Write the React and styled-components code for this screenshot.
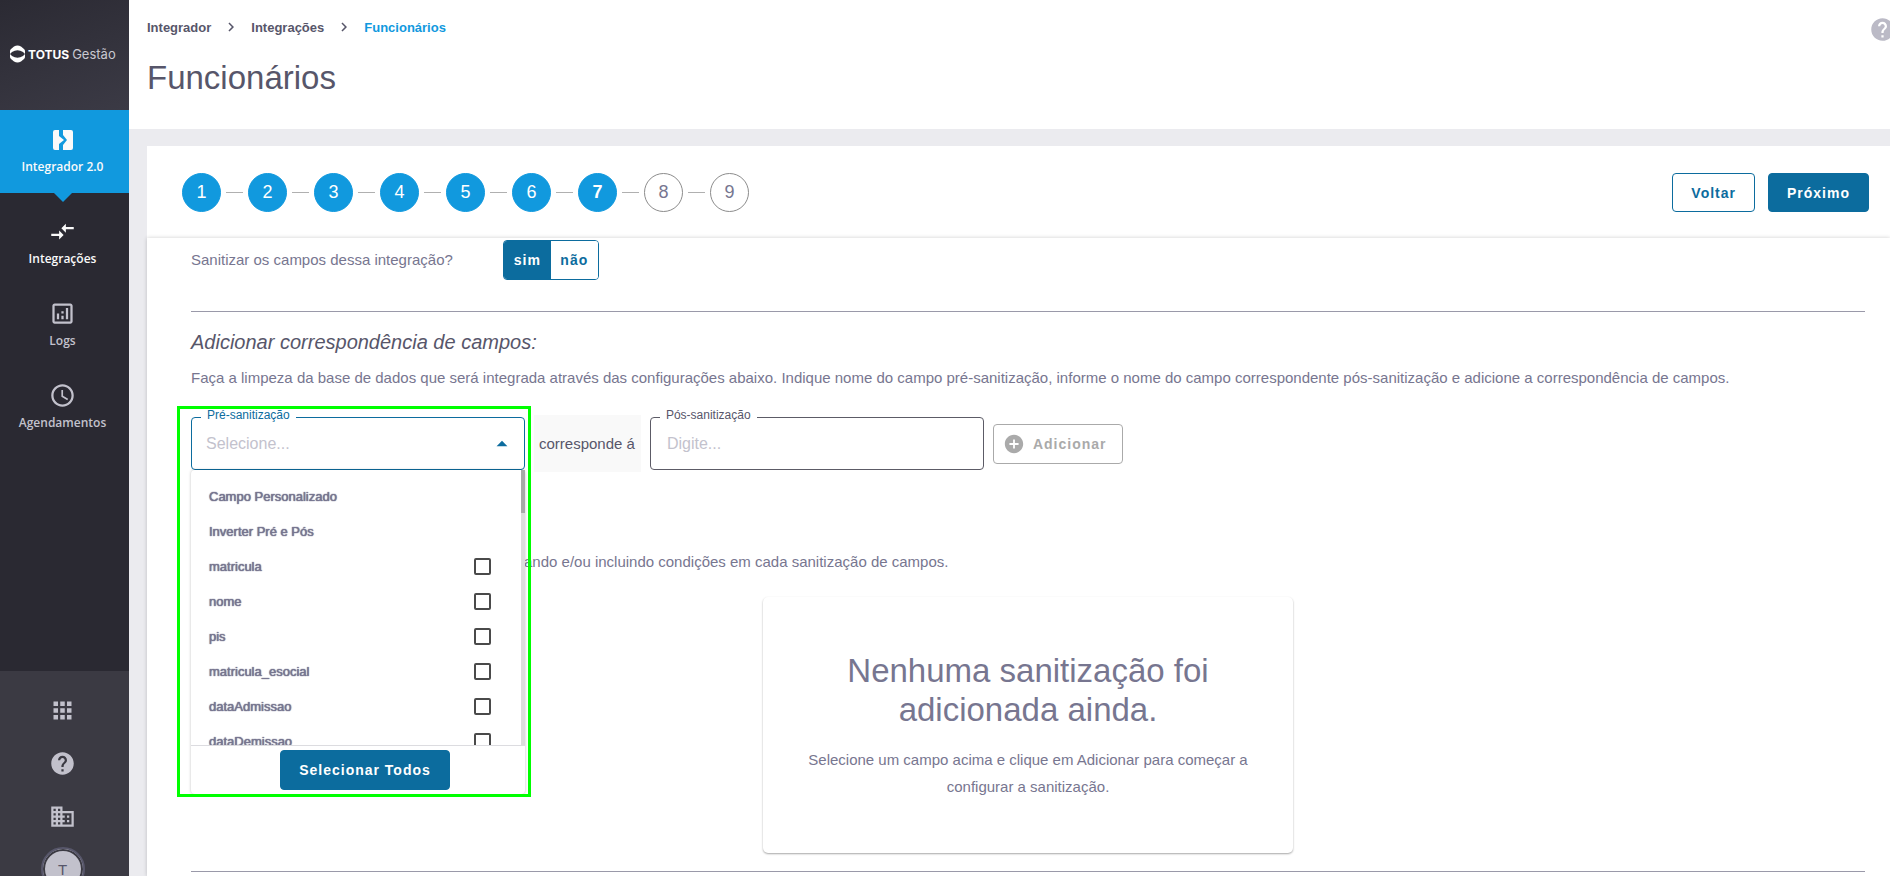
import { useState } from 'react';
import styled, { createGlobalStyle, css } from 'styled-components';
import {
	MdAddCircle,
	MdApps,
	MdArrowDropUp,
	MdBusiness,
	MdChevronRight,
	MdCompareArrows,
	MdHelp,
	MdOutlineAnalytics,
	MdSchedule,
} from 'react-icons/md';

const colors = {
	blue: '#1199de',
	action: '#0c6c9e',
	text: '#777690',
	textDark: '#57566a',
	rule: '#9a99a9',
	page: '#ebebef',
	icon: '#c2c1cc',
};

const steps = [1, 2, 3, 4, 5, 6, 7, 8, 9];
const currentStep = 7;

const fields = ['matricula', 'nome', 'pis', 'matricula_esocial', 'dataAdmissao', 'dataDemissao'];

const IntegradorIcon = () => (
	<svg width="20" height="20" viewBox="0 0 20 20" fill="#fafafa" aria-hidden="true">
		<path d="M2 0h4v6l5 4-5 4v6H2a2 2 0 0 1-2-2V2a2 2 0 0 1 2-2z" />
		<path d="M10 0h8a2 2 0 0 1 2 2v16a2 2 0 0 1-2 2h-8v-5l4-5-4-5z" />
	</svg>
);

const LogoMark = () => (
	<svg width="15" height="18" viewBox="0 0 15 18" fill="#fff" aria-hidden="true">
		<path
			fillRule="evenodd"
			d="M4 1.5Q7.5-.5 11 1.5L14 4Q15 5 15 6V12Q15 13 14 14L11 16.5Q7.5 18.5 4 16.5L1 14Q0 13 0 12V6Q0 5 1 4ZM0 9L2 7Q7.5 3.5 13 7L15 9L13 11Q7.5 14.5 2 11Z"
		/>
	</svg>
);

const menu = [
	{ label: 'Integrações', icon: MdCompareArrows, bright: true },
	{ label: 'Logs', icon: MdOutlineAnalytics },
	{ label: 'Agendamentos', icon: MdSchedule },
];

const Sidebar = () => (
	<Side>
		<Logo>
			<LogoMark />
			<strong>TOTUS</strong>
			<span>Gestão</span>
		</Logo>
		<Nav>
			<NavItem href="#integrador" $active>
				<NavIcon>
					<IntegradorIcon />
				</NavIcon>
				Integrador 2.0
			</NavItem>
			<SubNav>
				{menu.map(({ label, icon: Icon, bright }) => (
					<NavItem key={label} href={`#${label}`} $bright={bright}>
						<NavIcon>
							<Icon />
						</NavIcon>
						{label}
					</NavItem>
				))}
			</SubNav>
		</Nav>
		<SideFooter>
			<SideButton aria-label="Aplicativos">
				<MdApps />
			</SideButton>
			<SideButton aria-label="Ajuda">
				<MdHelp />
			</SideButton>
			<SideButton aria-label="Empresa">
				<MdBusiness />
			</SideButton>
			<Avatar>T</Avatar>
		</SideFooter>
	</Side>
);

const Stepper = () => (
	<Steps>
		{steps.map((step) => (
			<Step key={step}>
				<StepCircle $done={step <= currentStep} $current={step === currentStep}>
					{step}
				</StepCircle>
			</Step>
		))}
	</Steps>
);

const FieldPicker = () => (
	<Picker>
		<Field $active>
			<FieldLabel htmlFor="pre" $active>
				Pré-sanitização
			</FieldLabel>
			<FieldInput id="pre" placeholder="Selecione..." />
			<MdArrowDropUp />
		</Field>
		<Dropdown>
			<OptionsArea>
				<Options>
					<Option as="li">Campo Personalizado</Option>
					<Option as="li">Inverter Pré e Pós</Option>
					{fields.map((name) => (
						<li key={name}>
							<Option>
								{name}
								<Checkbox type="checkbox" />
							</Option>
						</li>
					))}
				</Options>
				<Track>
					<Thumb />
				</Track>
			</OptionsArea>
			<DropdownFooter>
				<Button $filled>Selecionar Todos</Button>
			</DropdownFooter>
		</Dropdown>
		<Highlight />
	</Picker>
);

export default function App() {
	const [sanitize, setSanitize] = useState(true);

	return (
		<Layout>
			<GlobalStyle />
			<Sidebar />
			<Main>
				<Header>
					<div>
						<Breadcrumb>
							<Crumb href="#integrador">Integrador</Crumb>
							<MdChevronRight />
							<Crumb href="#integracoes">Integrações</Crumb>
							<MdChevronRight />
							<Crumb href="#funcionarios" $current>
								Funcionários
							</Crumb>
						</Breadcrumb>
						<Title>Funcionários</Title>
					</div>
					<HelpButton aria-label="Ajuda">
						<MdHelp />
					</HelpButton>
				</Header>
				<Content>
					<Toolbar>
						<Stepper />
						<Actions>
							<Button>Voltar</Button>
							<Button $filled>Próximo</Button>
						</Actions>
					</Toolbar>
					<Panel>
						<Question>
							<Text>Sanitizar os campos dessa integração?</Text>
							<Toggle>
								<ToggleButton $on={sanitize} onClick={() => setSanitize(true)}>
									sim
								</ToggleButton>
								<ToggleButton $on={!sanitize} onClick={() => setSanitize(false)}>
									não
								</ToggleButton>
							</Toggle>
						</Question>
						<Rule />
						<Subtitle>Adicionar correspondência de campos:</Subtitle>
						<Text>
							Faça a limpeza da base de dados que será integrada através das configurações abaixo. Indique nome do campo
							pré-sanitização, informe o nome do campo correspondente pós-sanitização e adicione a correspondência de campos.
						</Text>
						<Match>
							<FieldPicker />
							<MatchText>corresponde á</MatchText>
							<Field>
								<FieldLabel htmlFor="pos">Pós-sanitização</FieldLabel>
								<FieldInput id="pos" placeholder="Digite..." />
							</Field>
							<AddButton disabled>
								<MdAddCircle />
								Adicionar
							</AddButton>
						</Match>
						<Hint>ando e/ou incluindo condições em cada sanitização de campos.</Hint>
						<Empty>
							<EmptyTitle>Nenhuma sanitização foi adicionada ainda.</EmptyTitle>
							<EmptyText>Selecione um campo acima e clique em Adicionar para começar a configurar a sanitização.</EmptyText>
						</Empty>
						<Rule />
					</Panel>
				</Content>
			</Main>
		</Layout>
	);
}

const GlobalStyle = createGlobalStyle`
	* {
		box-sizing: border-box;
	}

	body {
		margin: 0;
		font-family: 'Liberation Sans', Arial, sans-serif;
		font-size: 15px;
		color: ${colors.text};
		background: ${colors.page};
	}

	button, input {
		font-family: inherit;
	}

	h1, h2, h3, p, ul, ol {
		margin: 0;
		padding: 0;
		font-weight: 400;
		list-style: none;
	}
`;

const Layout = styled.div`
	display: flex;
	height: 100vh;
	overflow: hidden;
`;

const Side = styled.aside`
	flex: 0 0 129px;
	display: flex;
	flex-direction: column;
	background: #2a2932;
	color: ${colors.icon};
`;

const Logo = styled.div`
	flex: 0 0 110px;
	display: flex;
	align-items: center;
	gap: 3px;
	padding: 0 0 2px 10px;
	background: linear-gradient(160deg, #2b2a33, #3b3a45);
	color: #fff;
	font-family: Inter, sans-serif;
	font-size: 13px;

	strong {
		font-size: 12px;
	}

	span {
		color: #c9c8d0;
	}
`;

const Nav = styled.nav`
	flex: 1;
`;

const SubNav = styled.div`
	padding-top: 9px;
`;

const NavItem = styled.a`
	position: relative;
	display: flex;
	flex-direction: column;
	align-items: center;
	gap: 5px;
	height: ${({ $active }) => ($active ? 83 : 82)}px;
	padding: 16px 4px 0 0;
	color: ${({ $active, $bright }) => ($active || $bright ? '#fafafa' : colors.icon)};
	font-family: 'Open Sans', sans-serif;
	font-size: 12px;
	font-weight: 600;
	line-height: 18px;
	text-decoration: none;

	${({ $active }) =>
		$active &&
		css`
			background: ${colors.blue};

			&::after {
				content: '';
				position: absolute;
				top: 100%;
				left: 54px;
				border: 9px solid transparent;
				border-top-color: ${colors.blue};
				border-bottom: 0;
			}
		`}
`;

const NavIcon = styled.span`
	display: flex;
	align-items: center;
	justify-content: center;
	height: 27px;
	font-size: 27px;
`;

const SideFooter = styled.div`
	flex: 0 0 205px;
	display: flex;
	flex-direction: column;
	align-items: center;
	gap: 26px;
	padding: 26px 4px 0 0;
	background: #3b3a43;
	overflow: hidden;
`;

const SideButton = styled.button`
	display: flex;
	padding: 0;
	border: 0;
	background: none;
	color: ${colors.icon};
	font-size: 27px;
`;

const Avatar = styled.button`
	flex: none;
	width: 44px;
	height: 44px;
	margin-top: -9px;
	padding: 0;
	border: 2px solid #57566a;
	border-radius: 50%;
	background: ${colors.icon};
	box-shadow: inset 0 0 0 2px #3b3a43;
	color: ${colors.textDark};
	font-size: 15px;
`;

const Main = styled.main`
	flex: 1;
	min-width: 0;
	display: flex;
	flex-direction: column;
`;

const Header = styled.header`
	flex: 0 0 129px;
	display: flex;
	justify-content: space-between;
	align-items: flex-start;
	padding: 16px 0 0 18px;
	background: #fff;
`;

const Breadcrumb = styled.nav`
	display: flex;
	align-items: center;
	gap: 11px;
	height: 22px;
	color: ${colors.textDark};

	svg {
		font-size: 18px;
	}
`;

const Crumb = styled.a`
	color: ${({ $current }) => ($current ? colors.blue : colors.textDark)};
	font-size: 13px;
	font-weight: 700;
	text-decoration: none;
`;

const Title = styled.h1`
	margin-top: 20px;
	color: ${colors.textDark};
	font-size: 33px;
	line-height: 39px;
`;

const HelpButton = styled.button`
	display: flex;
	width: 21px;
	padding: 0;
	border: 0;
	background: none;
	overflow: hidden;
	color: #bbbac6;

	svg {
		flex: none;
		width: 27px;
		height: 27px;
	}
`;

const Content = styled.div`
	flex: 1;
	min-height: 0;
	display: flex;
	flex-direction: column;
	padding: 17px 0 0 18px;
`;

const Toolbar = styled.div`
	display: flex;
	justify-content: space-between;
	padding: 27px 21px 26px 35px;
	background: #fff;
`;

const Steps = styled.ol`
	display: flex;
`;

const Step = styled.li`
	display: flex;
	align-items: center;

	& + &::before {
		content: '';
		width: 17px;
		height: 1px;
		margin: 0 5px;
		background: #b0b0b0;
	}
`;

const StepCircle = styled.button`
	width: 39px;
	height: 39px;
	padding: 0;
	border: 1px solid ${({ $done }) => ($done ? colors.blue : '#8c8c8c')};
	border-radius: 50%;
	background: ${({ $done }) => ($done ? colors.blue : '#fff')};
	color: ${({ $done }) => ($done ? '#fff' : colors.text)};
	font-size: 18px;
	font-weight: ${({ $current }) => ($current ? 700 : 400)};
`;

const Actions = styled.div`
	display: flex;
	gap: 13px;
`;

const Button = styled.button`
	height: 39px;
	padding: 0 18px;
	border: 1px solid ${colors.action};
	border-radius: 4px;
	background: ${({ $filled }) => ($filled ? colors.action : '#fff')};
	color: ${({ $filled }) => ($filled ? '#fff' : colors.action)};
	font-size: 14px;
	font-weight: 700;
	letter-spacing: 1px;
	white-space: nowrap;
`;

const AddButton = styled(Button)`
	display: flex;
	align-items: center;
	gap: 8px;
	height: 40px;
	padding: 0 16px 0 9px;
	border-color: #aaa;
	color: #aaa;

	svg {
		width: 22px;
		height: 22px;
	}
`;

const Panel = styled.section`
	flex: 1;
	min-height: 0;
	padding: 2px 25px 0 44px;
	background: #fff;
	box-shadow: 0 0 4px rgba(0, 0, 0, 0.2);
`;

const Text = styled.p`
	line-height: 20px;
`;

const Question = styled.div`
	display: flex;
	align-items: center;
	gap: 50px;
	padding-bottom: 31px;
`;

const Toggle = styled.div`
	display: flex;
	border: 1px solid ${colors.action};
	border-radius: 4px;
	overflow: hidden;
`;

const ToggleButton = styled.button`
	width: 47px;
	height: 38px;
	padding: 0;
	border: 0;
	background: ${({ $on }) => ($on ? colors.action : '#fff')};
	color: ${({ $on }) => ($on ? '#fff' : colors.action)};
	font-size: 14px;
	font-weight: 700;
	letter-spacing: 1px;
`;

const Rule = styled.hr`
	height: 1px;
	margin: 0;
	border: 0;
	background: ${colors.rule};
`;

const Subtitle = styled.h2`
	margin: 18px 0 14px;
	color: ${colors.textDark};
	font-size: 20px;
	font-style: italic;
	line-height: 24px;
`;

const Match = styled.div`
	display: flex;
	align-items: center;
	gap: 9px;
	margin-top: 27px;
`;

const MatchText = styled.span`
	padding: 18px 6px 18px 5px;
	background: #f9f9f9;
	color: ${colors.textDark};
	line-height: 21px;
	white-space: nowrap;
`;

const Picker = styled.div`
	position: relative;
`;

const Field = styled.div`
	position: relative;
	display: flex;
	align-items: center;
	width: 334px;
	height: 53px;
	padding: 0 9px 0 ${({ $active }) => ($active ? 14 : 16)}px;
	border: 1px solid ${({ $active }) => ($active ? colors.action : '#5c5b66')};
	border-radius: 4px;

	svg {
		flex: none;
		width: 26px;
		height: 26px;
		color: ${colors.action};
	}
`;

/* sits over the border and cuts it */
const FieldLabel = styled.label`
	position: absolute;
	top: -10px;
	left: 9px;
	padding: 0 6px;
	background: #fff;
	color: ${({ $active }) => ($active ? colors.action : colors.textDark)};
	font-size: 12px;
	line-height: 14px;
`;

const FieldInput = styled.input`
	flex: 1;
	min-width: 0;
	padding: 0;
	border: 0;
	outline: 0;
	background: none;
	color: ${colors.textDark};
	font-size: 16px;

	&::placeholder {
		color: #c3c2cd;
	}
`;

const Dropdown = styled.div`
	position: absolute;
	top: 100%;
	left: 0;
	right: 0;
	z-index: 1;
	border-radius: 4px;
	background: #fff;
	box-shadow: 0 0 3px rgba(0, 0, 0, 0.25);
`;

const OptionsArea = styled.div`
	display: flex;
	height: 275px;
	overflow: hidden;
`;

const Options = styled.ul`
	flex: 1;
	padding: 9px 30px 0 18px;
`;

const Option = styled.label`
	display: flex;
	align-items: center;
	justify-content: space-between;
	height: 35px;
	font-size: 13px;
	text-shadow: 0 0 1px ${colors.text}, 0 0 1px ${colors.text};
`;

const Checkbox = styled.input`
	appearance: none;
	width: 17px;
	height: 17px;
	margin: 0;
	border: 2px solid #4a4a4a;
	border-radius: 2px;

	&:checked {
		background: ${colors.action};
	}
`;

const Track = styled.div`
	width: 4px;
	background: #dcdcdc;
`;

const Thumb = styled.div`
	height: 43px;
	background: #a8a8a8;
`;

const DropdownFooter = styled.div`
	display: flex;
	justify-content: center;
	padding: 4px 0 4px 14px;
	border-top: 1px solid #dcdce0;

	${Button} {
		height: 40px;
	}
`;

const Highlight = styled.div`
	position: absolute;
	top: -11px;
	left: -14px;
	z-index: 1;
	width: 354px;
	height: 391px;
	border: 3px solid #00ff00;
	pointer-events: none;
`;

const Hint = styled(Text)`
	margin: 80px 0 25px;
	padding-left: 333px;
`;

const Empty = styled.div`
	max-width: 530px;
	margin: 0 auto 18px;
	padding: 54px 30px 53px;
	border-radius: 5px;
	box-shadow: 0 1px 2px rgba(0, 0, 0, 0.35);
	text-align: center;
`;

const EmptyTitle = styled.h3`
	font-size: 33px;
	line-height: 39px;
`;

const EmptyText = styled.p`
	margin-top: 17px;
	line-height: 27px;
`;
